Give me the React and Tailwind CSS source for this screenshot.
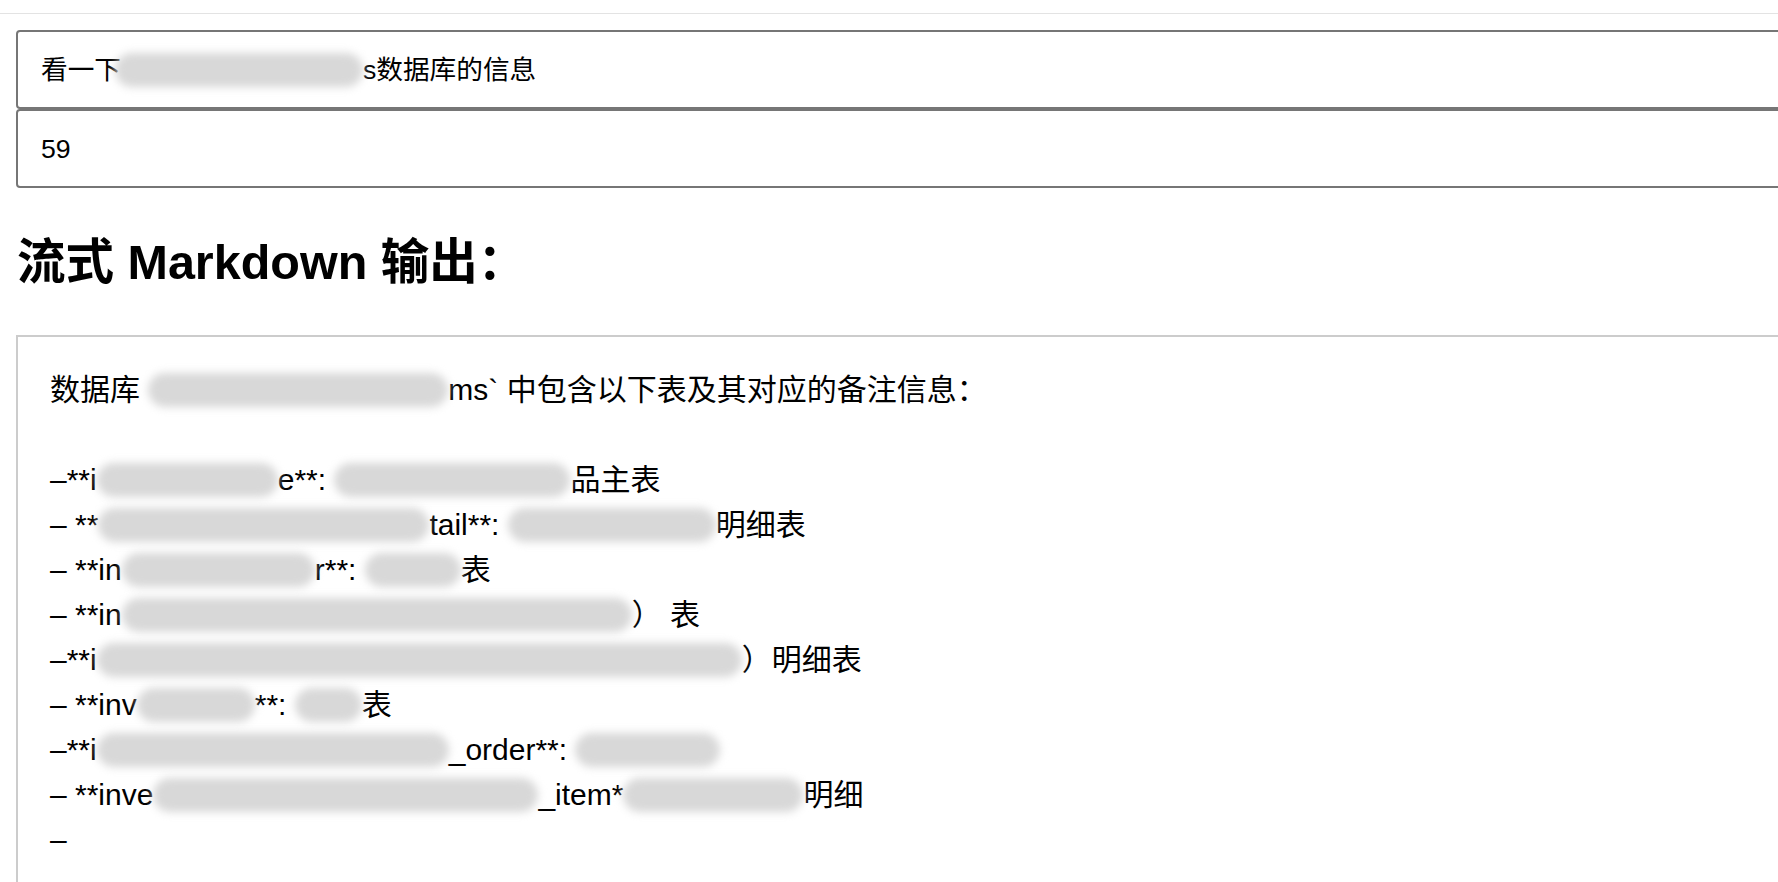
import React from "react";

// soft grey smear standing in for the redacted bits
function Smudge({ w, className = "" }) {
    return (
        <span
            className={`inline-block h-[34px] align-middle rounded-full bg-[#d8d8d8] blur-[4px] ${w} ${className}`}
        />
    );
}

const LINES = [
    [["t", "数据库 "], ["b", "w-[300px]"], ["t", "ms` 中包含以下表及其对应的备注信息："]],
    [],
    [["t", "–**i"], ["b", "w-[181px]"], ["t", "e**: "], ["b", "w-[236px]"], ["t", "品主表"]],
    [["t", "– **"], ["b", "w-[331px]"], ["t", "tail**: "], ["b", "w-[208px]"], ["t", "明细表"]],
    [["t", "– **in"], ["b", "w-[193px]"], ["t", "r**: "], ["b", "w-[96px]"], ["t", "表"]],
    [["t", "– **in"], ["b", "w-[510px]"], ["t", "） 表"]],
    [["t", "–**i"], ["b", "w-[645px]"], ["t", "）明细表"]],
    [["t", "– **inv"], ["b", "w-[118px]"], ["t", "**: "], ["b", "w-[67px]"], ["t", "表"]],
    [["t", "–**i"], ["b", "w-[352px]"], ["t", "_order**: "], ["b", "w-[145px]"]],
    [["t", "– **inve"], ["b", "w-[385px]"], ["t", "_item*"], ["b", "w-[180px]"], ["t", "明细"]],
    [["t", "–"]],
];

export default function App() {
    return (
        <div className="w-full min-h-screen overflow-hidden bg-white text-black font-['Liberation_Sans','Noto_Sans_CJK_SC',sans-serif]">
            {/* top rule */}
            <div className="h-[14px] border-b border-[#e3e3e3]" />

            {/* inputs */}
            <div className="mt-[16px] ml-[16px] w-[1800px]">
                <div className="h-[79px] flex items-center px-[23px] border-2 border-[#767676] rounded-[4px] text-[26.67px] whitespace-pre">
                    <span>看一下</span>
                    <Smudge w="w-[248px]" className="-ml-[6px]" />
                    <span>s数据库的信息</span>
                </div>
                <div className="h-[79px] flex items-center px-[23px] border-2 border-[#767676] rounded-[4px] text-[26.67px]">
                    59
                </div>
            </div>

            {/* heading */}
            <h2 className="mt-[46px] ml-[17px] h-[56px] leading-[56px] text-[48.5px] font-bold whitespace-pre">
                流式 Markdown 输出：
            </h2>

            {/* streamed output */}
            <div className="mt-[45px] ml-[16px] w-[1800px] h-[700px] border-2 border-[#cccccc] pt-[30px] pl-[32px] text-[30px] leading-[45px]">
                {LINES.map((line, i) => (
                    <div key={i} className="h-[45px] whitespace-pre flex items-center">
                        {line.map(([kind, v], j) =>
                            kind === "t" ? <span key={j}>{v}</span> : <Smudge key={j} w={v} />
                        )}
                    </div>
                ))}
            </div>
        </div>
    );
}
